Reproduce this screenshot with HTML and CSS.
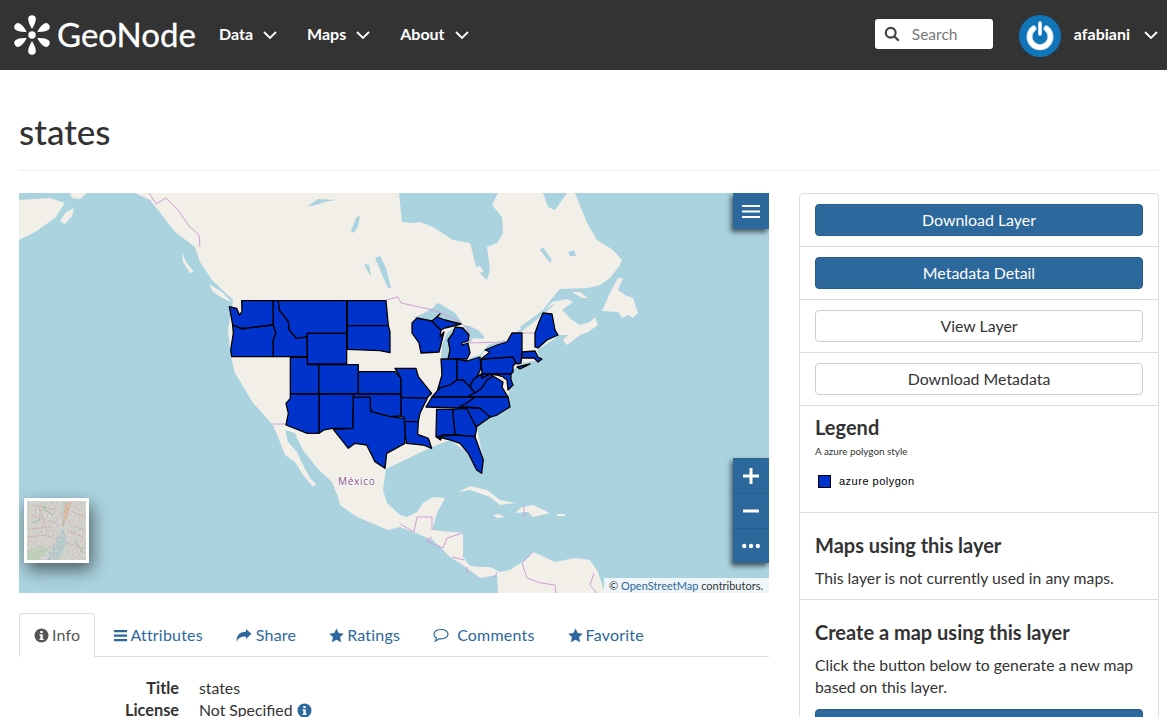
FILE: index.html
```html
<!DOCTYPE html>
<html lang="en">
<head>
<meta charset="utf-8">
<title>states</title>
<link rel="stylesheet" href="styles.css">
</head>
<body>
<header class="navbar">
  <a class="brand" href="#">
    <svg class="brand-mark" viewBox="-21 -21 42 42" aria-hidden="true">
      <g fill="#fff">
        <path d="M0-6C-1.500-9-3.800-12-3.800-16A3.800 3.800 0 0 1 3.800-16C3.800-12 1.500-9 0-6Z"/>
        <path d="M0-6C-1.500-9-3.800-12-3.800-16A3.800 3.800 0 0 1 3.800-16C3.800-12 1.500-9 0-6Z" transform="rotate(60)"/>
        <path d="M0-6C-1.500-9-3.800-12-3.800-16A3.800 3.800 0 0 1 3.800-16C3.800-12 1.500-9 0-6Z" transform="rotate(120)"/>
        <path d="M0-6C-1.500-9-3.800-12-3.800-16A3.800 3.800 0 0 1 3.800-16C3.800-12 1.500-9 0-6Z" transform="rotate(180)"/>
        <path d="M0-6C-1.500-9-3.800-12-3.800-16A3.800 3.800 0 0 1 3.800-16C3.800-12 1.500-9 0-6Z" transform="rotate(240)"/>
        <path d="M0-6C-1.500-9-3.800-12-3.800-16A3.800 3.800 0 0 1 3.800-16C3.800-12 1.500-9 0-6Z" transform="rotate(300)"/>
        <circle r="3.700"/>
      </g>
    </svg>
    <span class="brand-name">GeoNode</span>
  </a>
  <nav class="nav-menu">
    <a class="nav-item" href="#">Data <svg class="chev" viewBox="0 0 14 8"><path d="M1 1l6 6 6-6"/></svg></a>
    <a class="nav-item" href="#">Maps <svg class="chev" viewBox="0 0 14 8"><path d="M1 1l6 6 6-6"/></svg></a>
    <a class="nav-item" href="#">About <svg class="chev" viewBox="0 0 14 8"><path d="M1 1l6 6 6-6"/></svg></a>
  </nav>
  <form class="search">
    <svg class="search-icon" viewBox="0 0 16 16"><circle cx="6.700" cy="6.700" r="4.900"/><path d="M10.400 10.400l4.300 4.300"/></svg>
    <input class="search-input" type="text" placeholder="Search">
  </form>
  <a class="user" href="#">
    <svg class="avatar" viewBox="0 0 42 42" aria-hidden="true">
      <circle cx="21" cy="21" r="21" fill="#0f75b8"/>
      <path d="M14.500 13.500a10.500 10.500 0 1 0 13 0" fill="none" stroke="#d7e7f2" stroke-width="6" stroke-linecap="round"/>
      <path d="M14.500 13.500a10.500 10.500 0 1 0 13 0" fill="none" stroke="#fff" stroke-width="4" stroke-linecap="round"/>
      <path d="M21 8v11" stroke="#fff" stroke-width="3.600" stroke-linecap="round"/>
    </svg>
    <span class="user-name">afabiani</span>
    <svg class="chev chev-user" viewBox="0 0 14 8"><path d="M1 1l6 6 6-6"/></svg>
  </a>
</header>

<main class="page">
  <div class="page-header"><h1 class="page-title">states</h1></div>
  <div class="columns">
    <section class="main-col">
      <div class="map">
        <svg class="map-canvas" viewBox="19 193 750 400" aria-hidden="true">
          <rect class="water" x="19" y="193" width="750" height="400"/>
          <g class="land">
            <path d="M19 200L50 198 65 203 55 218 35 232 19 240Z"/>
            <path d="M70 193H87L80 199 72 198Z"/>
            <path d="M60 221L66 212 74 208 72 216 65 224Z"/>
            <path d="M135 193L150 200 162 215 175 232 195 247 200 262 212 280 233 300 228 330 231 357 235 373 253 403 273 425 278 437 285 455 295 462 303 475 313 487 316 484 310 478 302 463 297 452 288 442 285 430 295 433 297 438 303 450 317 468 332 482 338 497 340 505 357 517 388 530 400 527 433 540 450 557 463 565 480 578 497 575 498 593H605L598 572 590 560 575 558 555 562 540 555 533 552 525 560 510 570 500 572 490 567 480 567 470 566 463 557 463 533 432 530 437 513 445 498 433 497 423 503 417 512 407 517 400 515 387 503 383 490 386 469 432 447 450 440 468 453 482 473 483 460 477 427 507 403 513 370 522 363 540 360 537 350 553 340 558 335 568 335 563 340 567 345 580 335 588 332 598 325 595 317 590 322 580 325 572 320 562 310 573 302 567 299 552 302 543 313 522 329 520 327 543 310 557 292 560 289 588 288 600 285 610 278 620 265 622 260 613 250 597 240 587 223 575 193Z"/>
            <path d="M458 492L470 486 487 490 500 500 517 503 500 505 490 497 470 490Z"/>
            <path d="M522 507L533 505 550 513 533 517 528 512 515 513Z"/>
            <path d="M493 515L498 514 505 517 497 518Z"/>
            <path d="M557 514H565V516H557Z"/>
            <path d="M182 252L186 262 194 272 190 273 183 262Z"/>
            <path d="M209 284L222 292 232 302 226 300 213 292Z"/>
          </g>
          <g class="lakes">
            <path d="M399 193L402 222 413 223 420 222 433 227 453 240 470 243 477 270 487 280 490 270 487 247 497 243 503 233 502 217 492 205 498 193Z"/>
            <path d="M543 193L548 207 555 210 567 193Z"/>
            <path d="M308 206L318 199 335 200 325 202 312 206Z"/>
            <path d="M351 231L356 218 360 215 358 226 354 233Z"/>
            <path d="M375 258L380 256 386 268 391 288 388 288 381 272Z"/>
            <path d="M364 264L369 265 371 276 368 272Z"/>
            <path d="M413 318L420 315 433 308 437 303 442 305 455 313 462 323 458 324 432 321 417 318Z"/>
            <path d="M463 325L470 326 478 330 485 337 482 339 473 338 470 343 470 335 465 328Z"/>
            <path d="M455 327L453 333 448 340 450 350 448 359 441 358 442 345 447 333Z"/>
            <path d="M467 360L472 357 480 355 488 345 505 340 507 342 497 345 485 350 480 357 467 361Z"/>
            <path d="M508 339L522 328 540 314 555 303 553 306 540 317 522 331 510 340Z"/>
            <path d="M540 250L543 247 552 260 550 263Z"/>
            <path d="M568 252L574 250 576 256 570 256Z"/>
          </g>
          <path class="land-fill" d="M602 311L610 293 618 278 623 278 618 290 625 295 633 298 638 313 633 318 628 315 622 318 618 312Z"/>
          <path class="land-fill" d="M572 292L580 292 588 298 582 298Z"/>
          <path class="land-fill" d="M474 268L480 266 484 272 478 273Z"/>
          <g class="borders">
            <path d="M149 193L156 204 166 198 178 210 189 226 199 235 200 247"/>
            <path d="M386 300L398 297 401 303 433 310 453 318 468 328 470 343 505 342 522 333H535"/>
            <path d="M273 424H286"/>
            <path d="M400 524L414 532 417 517 432 517V530"/>
            <path d="M432 537L426 541 443 548 447 538 463 533"/>
            <path d="M452 557L464 560M467 567V574M497 572L495 577"/>
            <path d="M533 552L522 563 527 578 541 583 555 585 556 593"/>
            <path d="M594 573L590 585 597 593"/>
            <path d="M524 505V517"/>
          </g>
          <g class="states" transform="translate(220 290) scale(.3333)">
            <path d="M65 32H160V105L100 112 65 115 38 105 28 50 50 55 58 75 66 65Z"/>
            <path d="M38 105L65 117 100 112 160 105 168 130 160 150V200H35L32 180 40 130Z"/>
            <path d="M160 32H175L178 60 205 95 208 120 230 145 262 140V200H160V150L168 130 160 105Z"/>
            <path d="M175 32H380V130H262V140L230 145 208 120 205 95 178 60Z"/>
            <path d="M262 130H380V222H262Z"/>
            <path d="M382 32H498L505 107H382Z"/>
            <path d="M382 107H505L510 125V188L480 182 382 178Z"/>
            <path d="M296 224H415V312H296Z"/>
            <path d="M211 202H262V224H296V312H211Z"/>
            <path d="M415 245H525L543 265V312H415Z"/>
            <path d="M525 235H588L595 260 635 310 620 325 543 322V265Z"/>
            <path d="M543 322L622 325 600 370 595 395H553V383L543 378Z"/>
            <path d="M553 395H595L593 433 625 445 635 475 610 465 560 460 555 430Z"/>
            <path d="M400 312H543V378L510 380 452 365 450 322H400Z"/>
            <path d="M400 322H450L452 365 510 380 553 385 555 430V460L500 490 495 535 465 515 440 465 405 460 385 475 340 418 398 415Z"/>
            <path d="M297 312H400L398 415H338L312 420 297 430Z"/>
            <path d="M211 312H297V430H262L198 405 205 370 198 340 211 325Z"/>
            <path d="M738 352L780 355 815 378 770 410 740 375Z"/>
            <path d="M698 358L740 355 770 415 765 440 705 435Z"/>
            <path d="M650 358H698L705 435H665L662 450 648 440Z"/>
            <path d="M650 440L705 435 765 440 790 510 785 550 770 540 745 490 720 460 690 450Z"/>
          </g>
          <g class="states-east">
            <path d="M412 323L417 318 432 321 441 330 440 337 444 332 439 352 421 353 419 343 412 333Z"/>
            <path d="M432 321L440 314 437 317 445 320 461 324 453 326 445 328 441 330Z"/>
            <path d="M455 327L463 328 469 335 468 341 462 343 462 345 468 343 470 353 467 359H448L450 350 448 340 453 333Z"/>
            <path d="M441 359H457V380L450 385 440 388 437 392 442 375Z"/>
            <path d="M457 359L467 361 480 357 481 368 478 375 472 382 470 387 463 380H457Z"/>
            <path d="M481 359L513 357 516 363 513 366V372L511 374H482Z"/>
            <path d="M485 350L497 345 507 342 512 333H522V352L521 363 517 364 513 357 481 359 490 352Z"/>
            <path d="M522 352L535 351 538 357 542 359 538 362 534 358H522Z"/>
            <path d="M517 367L530 364 520 369Z"/>
            <path d="M535 347V333L539 322 543 313 552 314 555 330 558 335 547 340 538 348Z"/>
            <path d="M470 387L473 380 481 374 482 378 490 374 493 376 487 380 482 388 475 393Z"/>
            <path d="M432 397L440 388 450 385 457 380H463L470 387 475 393 467 397Z"/>
            <path d="M467 397L475 393 482 388 487 380 493 376 503 382 502 387 508 397Z"/>
            <path d="M482 374H511V380L513 385 508 390 507 380 503 377 497 375 490 374 482 378Z"/>
            <path d="M426 407L432 397H475L467 403 458 408Z"/>
            <path d="M475 397H508L510 407 505 410 497 415 490 417 480 408 465 407 458 408 467 403Z"/>
          </g>
          <text class="map-label" x="338" y="485">México</text>
        </svg>
        <button class="map-btn map-menu" type="button" aria-label="Menu">
          <svg viewBox="0 0 18 13"><path d="M0 1h18M0 6.500h18M0 12h18"/></svg>
        </button>
        <div class="map-zoom">
          <button class="map-btn" type="button" aria-label="Zoom in"><svg viewBox="0 0 18 18"><path class="thick" d="M9 1v16M1 9h16"/></svg></button>
          <button class="map-btn" type="button" aria-label="Zoom out"><svg viewBox="0 0 18 18"><path class="thick" d="M1 9h16"/></svg></button>
          <button class="map-btn" type="button" aria-label="More"><svg viewBox="0 0 18 18"><circle cx="2.200" cy="9" r="2.200"/><circle cx="9" cy="9" r="2.200"/><circle cx="15.800" cy="9" r="2.200"/></svg></button>
        </div>
        <div class="basemap">
          <svg viewBox="0 0 59 59" preserveAspectRatio="none" aria-hidden="true">
            <defs>
              <filter id="grain" x="0" y="0" width="100%" height="100%">
                <feTurbulence type="fractalNoise" baseFrequency=".5" numOctaves="3" seed="7"/>
                <feColorMatrix type="saturate" values=".9"/>
                <feComponentTransfer><feFuncA type="linear" slope="0" intercept=".36"/></feComponentTransfer>
              </filter>
            </defs>
            <rect width="59" height="59" fill="#dedbd3"/>
            <path d="M36 0L44 4 39 18 35 28 30 38 26 45 20 59H32L40 42 38 30 35 28Z" fill="#b4d0d4" opacity=".85"/>
            <path d="M38 3L45 1 40 17 35 26Z" fill="#e6bd98"/>
            <path d="M0 50L14 44 22 48 12 59H0Z" fill="#bcd8b4" opacity=".8"/>
            <path d="M0 36L18 34 30 38M46 24L59 30M40 42L59 48M12 6L20 30M4 14L30 22M44 10L59 16M2 28L24 26M42 30L56 36M6 4L28 8" fill="none" stroke="#d9a0a0" stroke-width=".7"/>
            <path d="M15 6L26 14M4 22L14 18M48 40L56 52M20 2L14 10" fill="none" stroke="#9cc79c" stroke-width="1.200"/>
            <rect width="59" height="59" filter="url(#grain)"/>
          </svg>
        </div>
        <div class="attribution">© <a href="#">OpenStreetMap</a> contributors.</div>
      </div>

      <ul class="tabs">
        <li class="tab active"><svg class="ti" viewBox="0 0 16 16"><path fill-rule="evenodd" d="M8 .5a7.500 7.500 0 1 0 0 15A7.500 7.500 0 0 0 8 .5zM6.700 3.200h2.600v2.200H6.700zM5.800 6.600h3.500v4.800h1v1.400H5.800v-1.400h1V8H5.800z"/></svg>Info</li>
        <li class="tab tab-attr"><svg class="ti ti-bars" viewBox="0 0 14 16"><path d="M0 2h14v2.400H0zM0 6.800h14v2.400H0zM0 11.600h14V14H0z"/></svg>Attributes</li>
        <li class="tab"><svg class="ti ti-share" viewBox="0 0 16 16"><path d="M16 6.200L10 1v3C4 4 0 6.800 0 15c1.500-4.500 4.500-6 10-6v2.800z"/></svg>Share</li>
        <li class="tab"><svg class="ti" viewBox="0 0 16 16"><path d="M8 .4l2.300 5 5.500.6-4 3.700 1.100 5.500L8 12.500l-4.900 2.700 1.100-5.500-4-3.700 5.500-.6z"/></svg>Ratings</li>
        <li class="tab"><svg class="ti ti-line" viewBox="0 0 16 16"><path d="M8 2.500c3.900 0 7 2 7 4.700s-3.100 4.700-7 4.700c-.7 0-1.300 0-1.900-.2C5 12.800 3.600 13.600 2.300 14c.6-.9 1-1.900 1.100-3C1.900 10.100 1 8.800 1 7.200 1 4.500 4.100 2.500 8 2.500z"/></svg>Comments</li>
        <li class="tab"><svg class="ti" viewBox="0 0 16 16"><path d="M8 .4l2.300 5 5.500.6-4 3.700 1.100 5.500L8 12.500l-4.900 2.700 1.100-5.500-4-3.700 5.500-.6z"/></svg>Favorite</li>
      </ul>

      <dl class="info">
        <dt>Title</dt><dd>states</dd>
        <dt>License</dt><dd>Not Specified <svg class="ti ti-blue" viewBox="0 0 16 16"><path fill-rule="evenodd" d="M8 .5a7.500 7.500 0 1 0 0 15A7.500 7.500 0 0 0 8 .5zM6.700 3.200h2.600v2.200H6.700zM5.800 6.600h3.500v4.800h1v1.400H5.800v-1.400h1V8H5.800z"/></svg></dd>
      </dl>
    </section>

    <aside class="side">
      <div class="side-row"><a class="btn btn-primary" href="#">Download Layer</a></div>
      <div class="side-row"><a class="btn btn-primary" href="#">Metadata Detail</a></div>
      <div class="side-row"><a class="btn" href="#">View Layer</a></div>
      <div class="side-row"><a class="btn" href="#">Download Metadata</a></div>
      <div class="side-block legend">
        <h4 class="side-title">Legend</h4>
        <p class="legend-desc">A azure polygon style</p>
        <div class="legend-item"><span class="legend-swatch"></span><span class="legend-label">azure polygon</span></div>
      </div>
      <div class="side-block maps">
        <h4 class="side-title">Maps using this layer</h4>
        <p class="side-text">This layer is not currently used in any maps.</p>
      </div>
      <div class="side-block create">
        <h4 class="side-title">Create a map using this layer</h4>
        <p class="side-text">Click the button below to generate a new map based on this layer.</p>
        <a class="btn btn-primary" href="#">Create a Map</a>
      </div>
    </aside>
  </div>
</main>
</body>
</html>
```
FILE: styles.css
```css
* { box-sizing: border-box; }
html, body { height: 717px; overflow: hidden; }
body { margin: 0; background: #fff; color: #333; font-family: Lato, "Liberation Sans", sans-serif; font-size: 16px; line-height: 22px; }
a { color: inherit; text-decoration: none; }

.navbar { display: flex; align-items: center; height: 70px; background: #333; color: #fff; padding: 0 9px 0 11px; }
.brand { display: flex; align-items: center; width: 208px; }
.brand-mark { width: 42px; height: 42px; flex: none; margin-bottom: 0; }
.brand-name { font-family: Lato, sans-serif; font-size: 33px; line-height: 40px; margin-left: 4px; margin-bottom: 3px; -webkit-text-stroke: .3px #fff; }
.nav-menu { display: flex; gap: 30px; }
.nav-item { display: flex; align-items: center; gap: 10px; font-weight: 700; font-size: 16px; margin-bottom: 2px; }
.chev { width: 14px; height: 8px; fill: none; stroke: #fff; stroke-width: 1.800; margin-top: 1px; }
.search { display: flex; align-items: center; width: 118px; height: 30px; margin-left: auto; margin-bottom: 2px; background: #fff; border-radius: 3px; padding-left: 9px; }
.search-icon { width: 16px; height: 16px; flex: none; fill: none; stroke: #444; stroke-width: 2.200; }
.search-input { width: 80px; border: 0; outline: 0; padding: 0; margin-left: 12px; font: 15.500px Lato, sans-serif; background: none; }
.search-input::placeholder { color: #777; opacity: 1; }
.user { display: flex; align-items: center; margin-left: 26px; margin-top: 2px; }
.avatar { width: 42px; height: 42px; }
.user-name { margin-left: 13px; margin-bottom: 4px; font-weight: 700; font-size: 16px; }
.chev-user { margin-left: 14px; margin-bottom: 4px; }

.page { padding: 0 8px 0 19px; }
.page-header { padding: 41px 0 18px; border-bottom: 1px solid #eee; margin-bottom: 22px; height: 101px; }
.page-title { margin: 0; font-size: 35px; line-height: 40px; font-weight: 500; color: #333; }
.columns { display: grid; grid-template-columns: 750px 360px; gap: 30px; }

.map { position: relative; width: 750px; height: 400px; overflow: hidden; }
.map-canvas { display: block; width: 750px; height: 400px; }
.water { fill: #aad3df; }
.land path, .land-fill { fill: #f2efe9; }
.lakes path { fill: #aad3df; }
.borders path { fill: none; stroke: #cf9fd5; stroke-width: 1; }
.states path { fill: #0033cc; stroke: #000; stroke-width: 3.900; stroke-linejoin: round; }
.states-east path { fill: #0033cc; stroke: #000; stroke-width: 1.300; stroke-linejoin: round; }
.map-label { font-family: "Open Sans", sans-serif; font-size: 10px; letter-spacing: .7px; fill: #86508f; paint-order: stroke; stroke: #fff; stroke-width: 2px; stroke-opacity: .7; }
.map-btn { display: flex; align-items: center; justify-content: center; width: 36px; height: 35px; padding: 0; border: 0; background: #2c689c; }
.map-btn + .map-btn { border-top: 1px solid #285e8e; }
.map-btn svg { width: 18px; height: 18px; fill: #fff; }
.map-btn path { fill: none; stroke: #fff; stroke-width: 1.800; }
.map-btn path.thick { stroke-width: 3; }
.map-menu { position: absolute; top: 0; right: 0; height: 36px; box-shadow: -2px 3px 5px rgba(0,0,0,.6); }
.map-menu svg { height: 13px; }
.map-zoom { position: absolute; right: 0; top: 265px; box-shadow: -2px 3px 5px rgba(0,0,0,.6); }
.basemap { position: absolute; left: 5px; top: 305px; width: 65px; height: 65px; border: 3px solid #fff; box-shadow: 3px 7px 16px rgba(0,0,0,.55); }
.basemap svg { display: block; width: 100%; height: 100%; }
.attribution { position: absolute; right: 0; bottom: 0; height: 15px; padding: 0 6px 0 5px; background: rgba(255,255,255,.8); font-size: 11px; line-height: 15px; color: #333; }
.attribution a { color: #2c689c; }

.tabs { display: flex; list-style: none; margin: 20px 0 0; padding: 0; height: 44px; border-bottom: 1px solid #ddd; }
.tab { display: flex; align-items: center; height: 44px; padding: 0 14px; color: #2c689c; font-size: 16px; letter-spacing: .2px; border: 1px solid transparent; margin-right: 3px; }
.tab.active { color: #555; background: #fff; border-color: #ddd #ddd #fff; border-radius: 4px 4px 0 0; }
.tab-attr { margin-right: 3px; }
.ti { width: 15px; height: 15px; fill: currentColor; margin-right: 3px; flex: none; }
.ti-bars { margin-right: 2px; }
.ti-share { width: 16px; margin-right: 4px; }
.ti-line { width: 16px; height: 16px; fill: none; stroke: currentColor; stroke-width: 1.200; margin-right: 8px; }
.ti-blue { color: #2c689c; vertical-align: -2px; margin: 0; }
.info { display: grid; grid-template-columns: 160px 1fr; column-gap: 20px; margin: 20px 0 0; font-size: 15.800px; }
.info dt { text-align: right; font-weight: 700; font-size: 16.300px; }
.info dd { margin: 0; }

.side { border: 1px solid #ddd; border-radius: 4px 4px 0 0; }
.side-row { padding: 10px 15px; height: 53px; border-bottom: 1px solid #ddd; }
.btn { display: block; height: 32px; border: 1px solid #ccc; border-radius: 4px; text-align: center; font-size: 15.900px; line-height: 30px; color: #333; background: #fff; }
.btn-primary { background: #2c689c; border-color: #285e8e; color: #fff; }
.side-block { padding: 0 15px; border-bottom: 1px solid #ddd; }
.side-title { margin: 0; font-size: 20px; line-height: 26px; font-weight: 700; color: #333; }
.side-text { margin: 0; font-size: 15.750px; line-height: 22px; }
.legend { height: 107px; padding-top: 8px; }
.legend-desc { margin: 4px 0 0; font-size: 9.900px; line-height: 14px; }
.legend-item { display: flex; align-items: center; margin: 12px 0 0 3px; }
.legend-swatch { width: 13px; height: 13px; background: #0033cc; border: 1px solid #000; }
.legend-label { margin-left: 8px; font-family: "Liberation Sans", sans-serif; font-size: 11px; letter-spacing: .5px; color: #000; }
.maps { height: 87px; padding-top: 19px; }
.maps .side-text { margin-top: 9px; }
.create { padding-top: 19px; border-bottom: 0; }
.create .side-text { margin-top: 9px; }
.create .btn { margin-top: 11px; }
```
